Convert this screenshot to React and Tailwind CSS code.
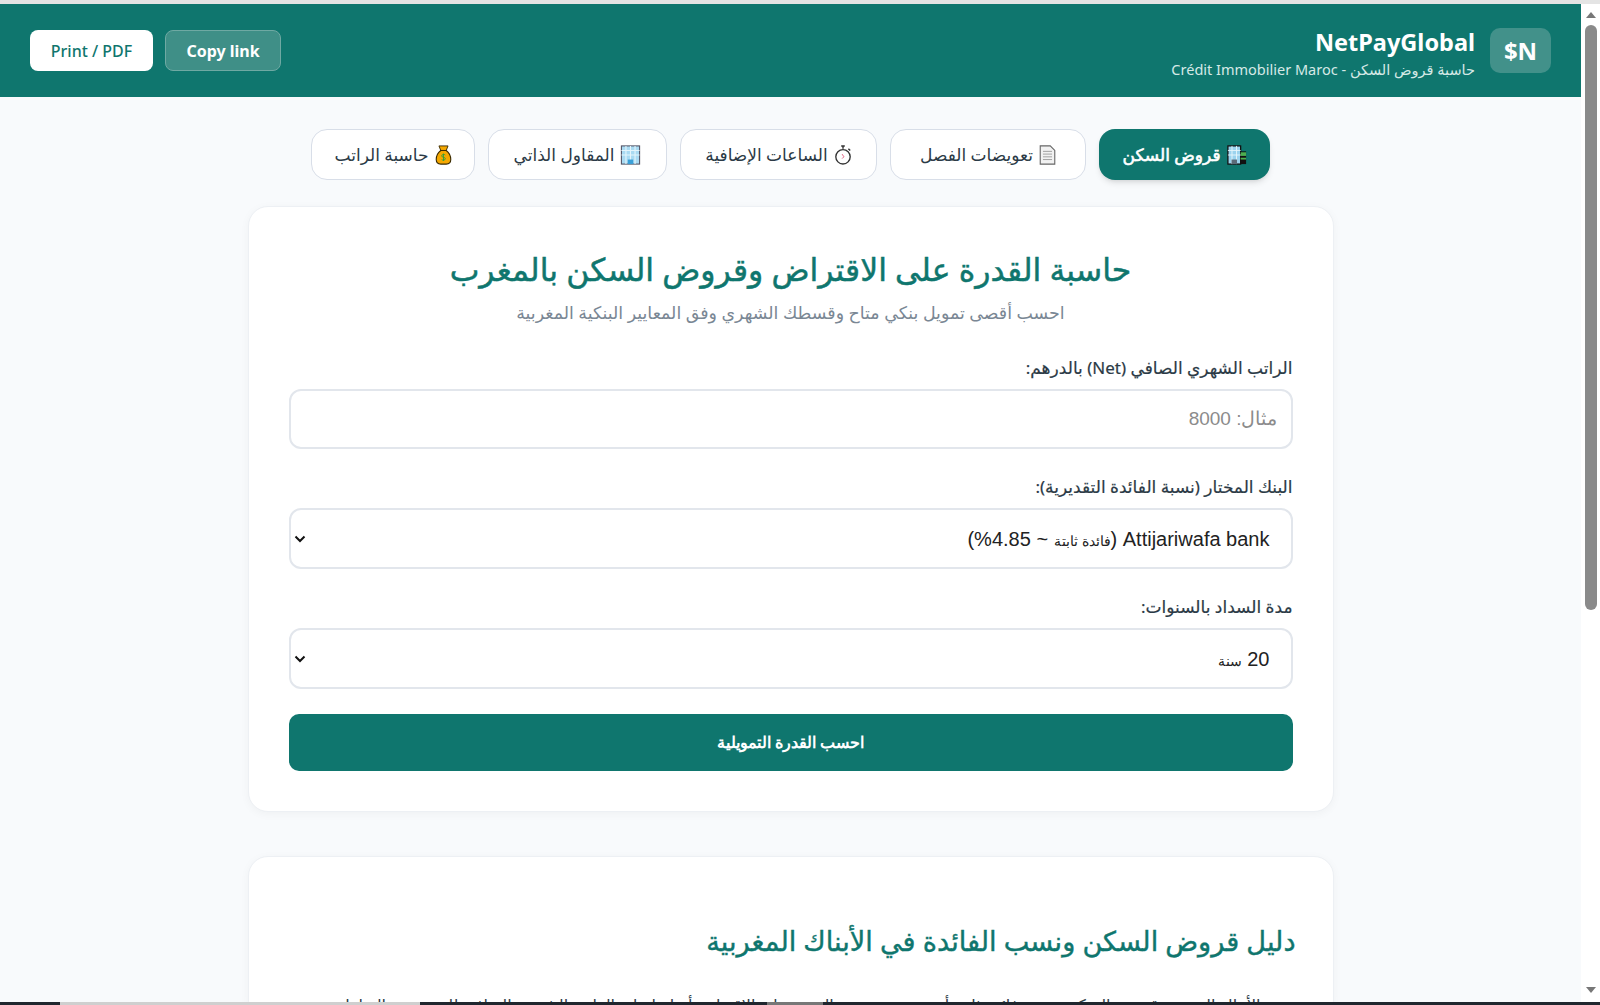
const font = { fontFamily: '"Noto Sans", "DejaVu Sans", sans-serif' };

const BuildingGreen = () => (
  <svg viewBox="0 0 22 22" className="h-[20px] w-[20px]">
    <rect x="1" y="1" width="14" height="20" fill="#9bd3ee" stroke="#111" strokeWidth="1.4" />
    <rect x="15" y="7" width="6" height="14" fill="#111" />
    <rect x="15" y="8" width="6" height="4" fill="#4caf50" />
    <rect x="15" y="14" width="6" height="2" fill="#4caf50" />
    <path d="M5.5 1v20M10.5 1v20M1 6h14M1 11h14" stroke="#e8f6fc" strokeWidth="1" />
    <rect x="5" y="16" width="6" height="5" fill="#5a6a78" />
  </svg>
);

const Doc = () => (
  <svg viewBox="0 0 18 22" className="h-[20px] w-[17px]">
    <path d="M1 1h11l5 5v15H1z" fill="#f2f2f2" stroke="#666" strokeWidth="1.2" />
    <path d="M4 7h10M4 10h10M4 13h10M4 16h10" stroke="#9a9a9a" strokeWidth="1" />
  </svg>
);

const Stopwatch = () => (
  <svg viewBox="0 0 20 22" className="h-[20px] w-[18px]">
    <path d="M8 1h4M10 1v3M16 4l2 2" stroke="#333" strokeWidth="1.6" fill="none" />
    <circle cx="10" cy="13" r="8" fill="#fff" stroke="#333" strokeWidth="1.5" />
    <path d="M9 10l2 3-2 2" stroke="#e2557a" strokeWidth="1" fill="none" />
  </svg>
);

const Office = () => (
  <svg viewBox="0 0 22 22" className="h-[20px] w-[21px]">
    <rect x="1" y="1" width="20" height="20" fill="#a9daf2" stroke="#556" strokeWidth="1.2" />
    <path d="M6 1v20M11 1v20M16 1v20M1 6h20M1 11h20" stroke="#e4f5fc" strokeWidth="1.2" />
    <rect x="8" y="16" width="6" height="5" fill="#3aa0d8" />
  </svg>
);

const MoneyBag = () => (
  <svg viewBox="0 0 18 22" className="h-[20px] w-[17px]">
    <path d="M4 1h10l-2 5h-6z" fill="#f5a800" stroke="#3a2a00" strokeWidth="1" />
    <path d="M6 6h6c4 3 5 7 5 10 0 3-2 5-5 5H6c-3 0-5-2-5-5 0-3 1-7 5-10z" fill="#f5a800" stroke="#3a2a00" strokeWidth="1.2" />
    <path d="M11 11c-1-1-4-1-4 1s4 1 4 3-3 2-4 1M9 9.500v8" stroke="#2e9e3b" strokeWidth="1" fill="none" />
  </svg>
);

const tabs = [
  { label: "قروض السكن", icon: BuildingGreen, active: true, width: "w-[171px]" },
  { label: "تعويضات الفصل", icon: Doc, width: "w-[196px]" },
  { label: "الساعات الإضافية", icon: Stopwatch, width: "w-[197px]" },
  { label: "المقاول الذاتي", icon: Office, width: "w-[179px]" },
  { label: "حاسبة الراتب", icon: MoneyBag, width: "w-[164px]" },
];

const Field = ({ label, children }) => (
  <div>
    <label className="mb-[9px] mt-[1px] block text-[17px] leading-[24px] text-[#2b3a46] [-webkit-text-stroke:0.2px]">{label}</label>
    {children}
  </div>
);

// custom select box, value shows latin text bigger than the arabic part
const SelectBox = ({ children }) => (
  <button className="flex h-[61px] w-full items-center justify-between rounded-[12px] border-2 border-[#e2e6ec] bg-white pl-[3px] pr-[21px] font-['Liberation_Sans',sans-serif] text-[20px] text-[#222]">
    <span>{children}</span>
    <svg viewBox="0 0 12 8" className="h-[8px] w-[12px]">
      <path d="M1.500 1.500L6 6l4.500-4.500" fill="none" stroke="#111" strokeWidth="2" />
    </svg>
  </button>
);

export default function App() {
  return (
    <div dir="ltr" className="flex h-screen flex-col overflow-hidden bg-white">
      <div className="h-[4px] shrink-0 bg-[#e4e4e4]"></div>
      <div className="flex min-h-0 flex-1">
        <div dir="rtl" className="min-w-0 flex-1 overflow-hidden bg-[#f8fafc]" style={font}>
          <header className="flex h-[93px] items-center justify-between bg-[#0f766e] px-[30px]">
            <div className="flex items-center gap-[15px]">
              <div dir="ltr" className="flex h-[45px] w-[61px] items-center justify-center rounded-[10px] bg-[#42918a] text-[24px] font-bold text-white">$N</div>
              <div className="mt-[4px]">
                <div className="text-[23.5px] font-bold leading-[31px] text-white">NetPayGlobal</div>
                <div className="mt-[1px] text-[14.5px] leading-[20px] text-[#d5e9e6]">حاسبة قروض السكن - Crédit Immobilier Maroc</div>
              </div>
            </div>
            <div dir="ltr" className="flex items-center gap-[12px]">
              <button className="h-[41px] w-[123px] rounded-[8px] bg-white text-[16px] font-medium text-[#0f766e]">Print / PDF</button>
              <button className="h-[41px] w-[116px] rounded-[8px] border border-[#6fa9a3] bg-[#3f8f87] text-[16px] font-bold text-white">Copy link</button>
            </div>
          </header>

          <nav className="flex justify-center gap-[13px] pt-[32px]">
            {tabs.map((tab) => (
              <button
                key={tab.label}
                className={`flex h-[51px] items-center justify-center gap-[6px] rounded-[16px] text-[17px] ${tab.width} ${tab.active ? "bg-[#0f766e] text-white shadow-md [-webkit-text-stroke:0.6px]" : "border border-[#d8dee8] bg-white text-[#2b3a46]"}`}
              >
                <tab.icon />
                <span>{tab.label}</span>
              </button>
            ))}
          </nav>

          <main className="mx-auto mt-[26px] flex w-[1086px] flex-col gap-[44px]">
            <section className="rounded-[20px] border border-[#edf0f4] bg-white p-[40px] shadow-[0_2px_10px_rgba(0,0,0,0.04)]">
              <h1 className="text-center text-[31.5px] leading-[44px] text-[#0f766e] [-webkit-text-stroke:0.5px]">حاسبة القدرة على الاقتراض وقروض السكن بالمغرب</h1>
              <p className="mt-[8px] text-center text-[17.400px] leading-[26px] text-[#7a8794]">احسب أقصى تمويل بنكي متاح وقسطك الشهري وفق المعايير البنكية المغربية</p>

              <div className="mt-[30px] flex flex-col gap-[25px]">
                <Field label="الراتب الشهري الصافي (Net) بالدرهم:">
                  <input
                    type="text"
                    placeholder="مثال: 8000"
                    className="h-[60px] w-full rounded-[12px] border-2 border-[#e2e6ec] bg-white pl-[16px] pr-[13px] font-['Liberation_Sans',sans-serif] text-[19px] placeholder:text-[#8b8b8b]"
                  />
                </Field>
                <Field label="البنك المختار (نسبة الفائدة التقديرية):">
                  <SelectBox>
                    Attijariwafa bank (<span className="text-[14px]">فائدة ثابتة</span> ~ 4.85%)
                  </SelectBox>
                </Field>
                <Field label="مدة السداد بالسنوات:">
                  <SelectBox>
                    20 <span className="text-[14px]">سنة</span>
                  </SelectBox>
                </Field>
                <button className="h-[57px] w-full rounded-[10px] bg-[#0f766e] font-['Liberation_Sans',sans-serif] text-[16px] font-bold text-white">احسب القدرة التمويلية</button>
              </div>
            </section>

            <section className="rounded-[20px] border border-[#edf0f4] bg-white px-[37px] pt-[64px] shadow-[0_2px_10px_rgba(0,0,0,0.04)]">
              <h2 className="text-[27.200px] leading-[40px] text-[#0f766e] [-webkit-text-stroke:0.4px]">دليل قروض السكن ونسب الفائدة في الأبناك المغربية</h2>
              <p className="mt-[30px] text-[16px] leading-[28px] text-[#2b3a46]">تقدم الأبناك المغربية قروض السكن بنسب فائدة ثابتة أو متغيرة، وتعتمد القدرة على الاقتراض أساسا على الراتب الشهري الصافي للمقترض والتزاماته</p>
            </section>
          </main>
        </div>

        <div className="flex w-[19px] shrink-0 flex-col items-center bg-white">
          <svg viewBox="0 0 10 6" className="mt-[8px] h-[6px] w-[10px]"><path d="M5 0l5 6H0z" fill="#777" /></svg>
          <div className="mt-[7px] h-[585px] w-[12px] rounded-full bg-[#8a8a8a]"></div>
          <div className="flex-1"></div>
          <svg viewBox="0 0 10 6" className="mb-[9px] h-[6px] w-[10px]"><path d="M0 0h10L5 6z" fill="#777" /></svg>
        </div>
      </div>
      <div className="flex h-[3px] shrink-0 bg-[#20262e]">
        <div className="w-[60px]"></div>
        <div className="w-[360px] bg-[#cfcfcf]"></div>
        <div className="w-[347px]"></div>
        <div className="w-[56px] bg-[#777]"></div>
      </div>
    </div>
  );
}
